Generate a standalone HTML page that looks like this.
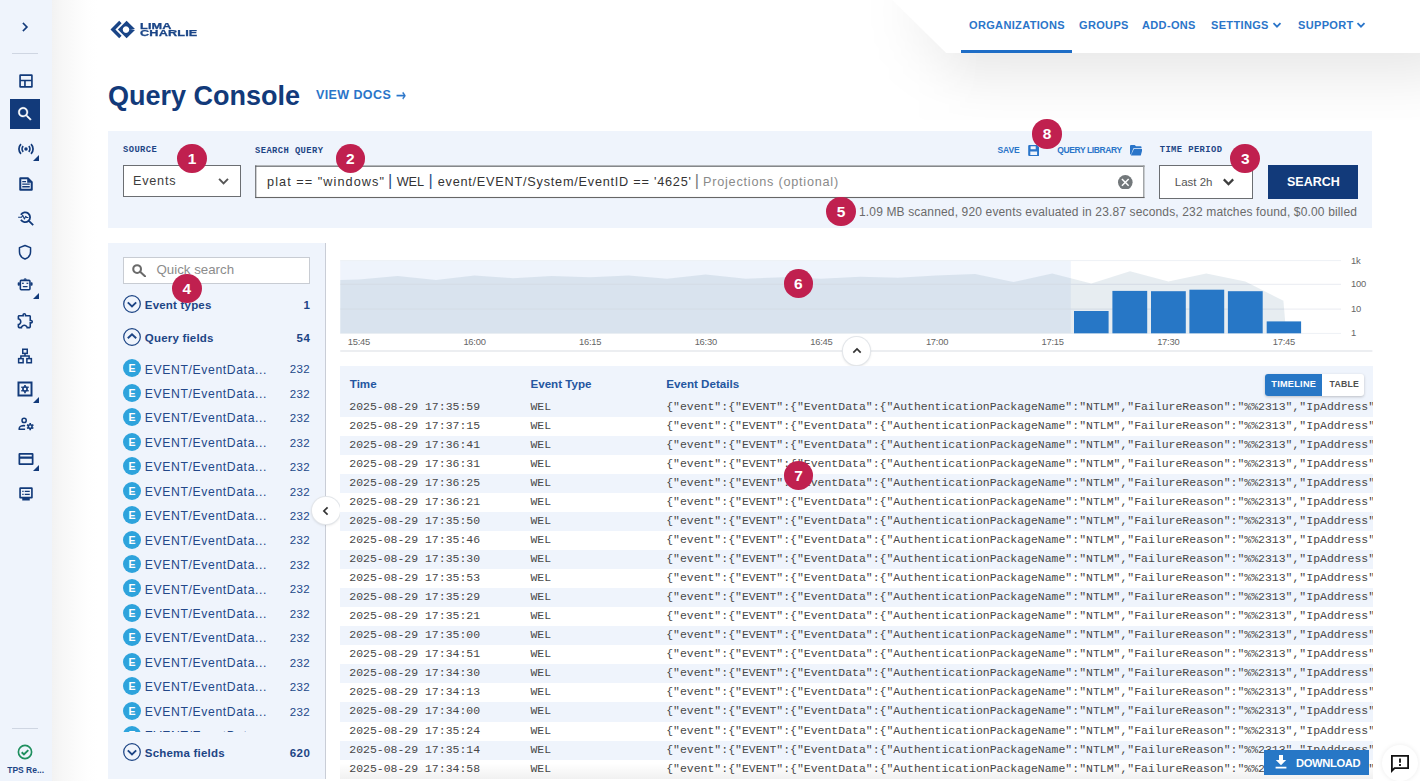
<!DOCTYPE html>
<html lang="en">
<head>
<meta charset="utf-8">
<title>Query Console</title>
<style>
*{box-sizing:border-box;margin:0;padding:0}
html,body{width:1420px;height:781px;overflow:hidden;background:#fff}
body{position:relative;font-family:"Liberation Sans",Arial,sans-serif;color:#123a7a}
.abs{position:absolute}
.t{position:absolute;white-space:nowrap;line-height:1}
#side{left:0;top:0;width:51.7px;height:781px;background:#eff4fc}
#sideshadow{left:51px;top:0;width:46px;height:781px;background:linear-gradient(90deg,#f2f2f2 0%,#f7f7f7 25%,#fbfbfb 55%,#fefefe 80%,#fff 100%)}
.tri{position:absolute;width:0;height:0;margin-top:-.6px;border-left:6.2px solid transparent;border-bottom:6.2px solid #123a7a}
.badge{position:absolute;width:29.6px;height:29.2px;border-radius:50%;background:#c0204f;color:#fff;font-family:"Liberation Sans",Arial,sans-serif;font-weight:bold;font-size:15.5px;line-height:29.6px;text-align:center}
.nav{position:absolute;top:18.7px;font-size:11px;font-weight:bold;color:#2a75c9;letter-spacing:.35px;line-height:12px;white-space:nowrap}
#spanel{left:108px;top:131px;width:1264.3px;height:96.7px;background:#eff4fc}
.lbl{position:absolute;font-family:"Liberation Mono","DejaVu Sans Mono",monospace;font-weight:bold;font-size:8.8px;letter-spacing:.42px;line-height:9px;color:#1d4585;white-space:nowrap}
.box{position:absolute;background:#fff;border:1px solid #6b6e72}
.pipe{display:inline-block;width:1.2px;height:15.5px;vertical-align:-3px;margin:0 2.4px 0 2.6px}
.row{position:absolute;left:0;width:1034px;height:19.1px;font-family:"Liberation Mono","DejaVu Sans Mono",monospace;font-size:11.475px;color:#484848;line-height:17.2px;white-space:nowrap}
.row span{position:absolute;top:0}
</style>
</head>
<body>
<div id="sideshadow" class="abs"></div>
<div id="side" class="abs"></div>
<div class="abs" style="left:12px;top:53px;width:26px;height:1px;background:#cfd6e2"></div>
<svg class="abs" style="left:16px;top:18.2px" width="18" height="18" viewBox="0 0 24 24"><path fill="#123a7a" d="M10 6L8.59 7.41 13.17 12l-4.58 4.59L10 18l6-6z" stroke="#123a7a" stroke-width=".3"/></svg>
<!-- dashboard -->
<svg class="abs" style="left:17.25px;top:71.5px" width="18" height="18" viewBox="0 0 24 24"><path fill="#123a7a" fill-rule="evenodd" d="M4.5 3h15A1.5 1.5 0 0 1 21 4.500v15a1.500 1.500 0 0 1-1.500 1.500h-15A1.500 1.500 0 0 1 3 19.500v-15A1.500 1.500 0 0 1 4.500 3zM5.200 5.400v4.800h13.600V5.400zM5.200 12.400v6.400h4.300v-6.400zM11.700 12.400v6.400h7.100v-6.400z"/></svg>
<!-- active search -->
<div class="abs" style="left:9.9px;top:98.900px;width:30.400px;height:30.200px;background:#123a7a"></div>
<svg class="abs" style="left:16.45px;top:105.25px" width="18" height="18" viewBox="0 0 24 24"><path fill="#fff" d="M15.5 14h-.79l-.28-.27C15.410 12.590 16 11.110 16 9.500 16 5.910 13.090 3 9.500 3S3 5.910 3 9.500 5.910 16 9.500 16c1.610 0 3.090-.590 4.230-1.570l.27.280v.790l5 4.990L20.490 19l-4.990-5zm-6 0C7.010 14 5 11.990 5 9.500S7.010 5 9.500 5 14 7.010 14 9.500 11.990 14 9.500 14z" stroke="#fff" stroke-width=".5"/></svg>
<!-- sensors -->
<svg class="abs" style="left:17.2px;top:140.2px" width="18" height="18" viewBox="0 0 24 24" fill="none" stroke="#123a7a" stroke-width="2.300" stroke-linecap="butt"><circle cx="12" cy="12" r="2.300" fill="#123a7a" stroke="none"/><path d="M8.300 8.300a5.300 5.300 0 0 0 0 7.400M15.700 8.300a5.300 5.300 0 0 1 0 7.400M5.300 5.400a9.400 9.400 0 0 0 0 13.200M18.700 5.400a9.400 9.400 0 0 1 0 13.200"/></svg>
<div class="tri" style="left:33.4px;top:156px"></div>
<!-- doc -->
<svg class="abs" style="left:17.25px;top:175px" width="18" height="18" viewBox="0 0 24 24"><path fill="#123a7a" fill-rule="evenodd" d="M4.500 3H15l6 6v10.500a1.500 1.500 0 0 1-1.500 1.500h-15A1.500 1.500 0 0 1 3 19.500v-15A1.500 1.500 0 0 1 4.500 3zM5.700 5.700v12.600h12.600V10.400H13.600V5.700zM7 8h5v1.800H7zM7 11.300h10v1.800H7zM7 14.700h10v1.800H7z"/></svg>
<!-- troubleshoot -->
<svg class="abs" style="left:16.65px;top:208.5px" width="18" height="18" viewBox="0 0 24 24" fill="none" stroke="#123a7a"><path stroke-width="2.400" d="M5.200 7.600A6.600 6.600 0 1 1 5.200 14.400M15.800 15.800L21.600 21.600"/><path stroke-width="1.400" stroke-linejoin="round" d="M1.500 11h4.600l1.500-2.600 2.300 5 1.800-3.600 1 1.400h2.500"/></svg>
<!-- shield -->
<svg class="abs" style="left:16.25px;top:243px" width="18" height="18" viewBox="0 0 24 24" fill="none" stroke="#123a7a" stroke-width="2" stroke-linejoin="round"><path d="M12 3.300L4.600 6.200v5.300c0 4.700 3.100 8.300 7.400 9.800 4.300-1.500 7.400-5.100 7.400-9.800V6.200z"/></svg>
<!-- robot -->
<svg class="abs" style="left:16px;top:275px" width="18" height="18" viewBox="16 275 18 18"><g fill="#123a7a"><rect x="20.35" y="280.35" width="9.6" height="9.4" rx=".9" fill="none" stroke="#123a7a" stroke-width="1.55"/><path d="M23.5 279.800a1.650 1.650 0 0 1 3.300 0z"/><rect x="17.700" y="282.200" width="2.200" height="3.500" rx=".9"/><rect x="30.400" y="282.200" width="2.200" height="3.500" rx=".9"/><rect x="22" y="282.700" width="1.800" height="1.200"/><rect x="26.500" y="282.700" width="1.800" height="1.200"/><rect x="22.700" y="285.900" width="5" height="1.300" rx=".6"/></g></svg>
<div class="tri" style="left:33.4px;top:294px"></div>
<!-- puzzle -->
<svg class="abs" style="left:15.6px;top:311.2px" width="19" height="19" viewBox="0 0 24 24"><path fill="#123a7a" d="M10.5 4.500c.280 0 .5.220.5.500v2h6v6h2c.280 0 .5.220.5.500s-.220.500-.500.500h-2v6h-2.120c-.680-1.750-2.390-3-4.380-3s-3.700 1.250-4.380 3H4v-2.120c1.750-.680 3-2.390 3-4.380 0-1.990-1.240-3.700-2.990-4.380L4 7h6V5c0-.280.220-.500.500-.500m0-2C9.120 2.500 8 3.620 8 5H4c-1.100 0-1.990.900-1.990 2v3.800h.290c1.490 0 2.700 1.210 2.700 2.700s-1.210 2.700-2.700 2.700H2V20c0 1.100.900 2 2 2h3.800v-.300c0-1.490 1.210-2.700 2.700-2.700s2.700 1.210 2.700 2.700v.300H17c1.100 0 2-.900 2-2v-4c1.380 0 2.500-1.120 2.500-2.500S20.380 11 19 11V7c0-1.100-.900-2-2-2h-4c0-1.380-1.120-2.500-2.500-2.500z"/></svg>
<!-- lan -->
<svg class="abs" style="left:15.650px;top:346.500px" width="18" height="18" viewBox="0 0 24 24" fill="none" stroke="#123a7a" stroke-width="2"><rect x="9" y="3" width="6" height="5.500"/><rect x="3.500" y="15.500" width="6" height="5.500"/><rect x="14.500" y="15.500" width="6" height="5.500"/><path d="M12 8.500v3.600M6.500 15.500v-3.400h11v3.400"/></svg>
<!-- settings app -->
<svg class="abs" style="left:16px;top:380.200px" width="18" height="18" viewBox="0 0 24 24"><path fill="#123a7a" fill-rule="evenodd" d="M2 2h20v20H2zM4.600 4.600v14.800h14.800V4.600z"/><g fill="none" stroke="#123a7a"><circle cx="12" cy="12" r="2.800" stroke-width="2.200"/><path stroke-width="2.200" d="M12 6.500v2M12 15.500v2M7.200 9.200l1.800 1M15 13.800l1.800 1M7.200 14.800l1.800-1M15 10.200l1.800-1"/></g></svg>
<div class="tri" style="left:33.4px;top:397.200px"></div>
<!-- manage accounts -->
<svg class="abs" style="left:16.800px;top:415px" width="18" height="18" viewBox="0 0 24 24" fill="none" stroke="#123a7a"><circle cx="9.500" cy="7.200" r="2.800" stroke-width="2"/><path stroke-width="2.100" d="M10.800 14.300C6.500 13.700 3 15.300 3 17.600v1.300h7.800"/><circle cx="17.6" cy="15.4" r="2.500" stroke-width="2.100"/><path stroke-width="2.200" d="M17.60 18.40L17.60 20.30M15.00 16.90L13.36 17.85M15.00 13.90L13.36 12.95M17.60 12.40L17.60 10.50M20.20 13.90L21.84 12.95M20.20 16.90L21.84 17.85"/></svg>
<!-- card -->
<svg class="abs" style="left:16.850px;top:450.150px" width="18" height="18" viewBox="0 0 24 24"><path fill="#123a7a" fill-rule="evenodd" d="M3.500 4h17A1.500 1.500 0 0 1 22 5.500v13a1.500 1.500 0 0 1-1.500 1.500h-17A1.500 1.500 0 0 1 2 18.500v-13A1.500 1.500 0 0 1 3.500 4zM4.300 6.200v2.300h15.400V6.200zM4.300 11.800v6h15.400v-6z"/></svg>
<div class="tri" style="left:33.4px;top:466px"></div>
<!-- dvr -->
<svg class="abs" style="left:17.250px;top:484.500px" width="18" height="18" viewBox="0 0 24 24"><path fill="#123a7a" fill-rule="evenodd" d="M4.500 3h15A1.500 1.500 0 0 1 21 4.500v12a1.500 1.500 0 0 1-1.500 1.500H17v2.800H7V18H4.500A1.500 1.500 0 0 1 3 16.500v-12A1.500 1.500 0 0 1 4.500 3zM5.200 5.200v10.600h13.600V5.200zM7 7.500h1.800v1.800H7zM10.300 7.500H17v1.800h-6.700zM7 11.500h1.800v1.800H7zM10.300 11.500H17v1.800h-6.700z"/></svg>
<!-- bottom -->
<div class="abs" style="left:12px;top:728px;width:26px;height:1px;background:#cfd6e2"></div>
<svg class="abs" style="left:16.250px;top:743.350px" width="18" height="18" viewBox="0 0 24 24" fill="none" stroke="#1e8f5e"><circle cx="12" cy="12" r="8.800" stroke-width="2.200"/><path stroke-width="2.600" d="M7.600 12.300l3 3 5.800-5.800"/></svg>
<div class="t" style="left:7.200px;top:765.500px;font-size:8.500px;font-weight:bold;color:#1d4585;letter-spacing:0">TPS Re...</div>

<div class="abs" style="left:860px;top:0;width:560px;height:120px;filter:drop-shadow(0 20px 30px rgba(0,0,0,.1));-webkit-mask-image:linear-gradient(90deg,transparent 0,rgba(0,0,0,.35) 40px,#000 120px);mask-image:linear-gradient(90deg,transparent 0,rgba(0,0,0,.35) 40px,#000 120px)"><div class="abs" style="left:0;top:-30px;width:600px;height:83.300px;background:#fff;clip-path:polygon(2px 0,86.500px 83.300px,600px 83.300px,600px 0)"></div></div>
<div class="abs" style="left:961px;top:50px;width:111px;height:3.300px;background:#1e6dc6"></div>
<div class="nav" style="left:969px">ORGANIZATIONS</div>
<div class="nav" style="left:1079px">GROUPS</div>
<div class="nav" style="left:1142px">ADD-ONS</div>
<div class="nav" style="left:1211px">SETTINGS</div>
<div class="nav" style="left:1298px">SUPPORT</div>
<svg class="abs" style="left:1272px;top:19.700px" width="10" height="10" viewBox="0 0 10 10" fill="none" stroke="#2a75c9" stroke-width="1.800"><path d="M1.500 3.200L5 6.700 8.500 3.200"/></svg>
<svg class="abs" style="left:1355.5px;top:19.700px" width="10" height="10" viewBox="0 0 10 10" fill="none" stroke="#2a75c9" stroke-width="1.800"><path d="M1.500 3.200L5 6.700 8.500 3.200"/></svg>
<!-- logo -->
<svg class="abs" style="left:108px;top:17.6px" width="30" height="24" viewBox="0 0 30 24"><g fill="#1a4587"><path d="M11.200 2.800L13.600 5.200 7.400 11.500l6.200 6.300-2.400 2.400L2.500 11.500z"/><path fill-rule="evenodd" d="M18.600 2.800l8.400 8.100-3.300.6h-2.400a3.300 3.300 0 1 0 0 .1l5.700.4-8.400 8.200-8.700-8.700z"/></g></svg>
<div class="t" style="left:140px;top:22.500px;font-size:8.200px;font-weight:bold;color:#1a4587;transform:scaleX(1.550);transform-origin:0 0;letter-spacing:.1px;line-height:7.500px;-webkit-text-stroke:.25px #1a4587">LIMA<br>CHARLIE</div>

<div class="t" style="left:108px;top:83px;font-size:27px;font-weight:bold;color:#123a7a">Query Console</div>
<div class="t" style="left:316px;top:89px;font-size:12.5px;font-weight:bold;color:#2a75c9;letter-spacing:.4px">VIEW DOCS</div>
<div class="t" style="left:396px;top:87.5px;font-family:'DejaVu Sans',sans-serif;font-size:15px;color:#2a75c9;transform:scale(.8,1.15);transform-origin:0 50%;-webkit-text-stroke:.25px #2a75c9">→</div>
<div id="spanel" class="abs"></div>
<div class="lbl" style="left:123px;top:146px">SOURCE</div>
<div class="box" style="left:123px;top:165px;width:118px;height:32px"></div>
<div class="t" style="left:133px;top:175px;font-size:12.700px;color:#3d3d3d;letter-spacing:.74px">Events</div>
<svg class="abs" style="left:217px;top:175px" width="13" height="13" viewBox="217 175 13 13" fill="none" stroke="#555" stroke-width="1.900"><path d="M219.100 178.800L223.550 183.400 228 178.800"/></svg>
<div class="lbl" style="left:255px;top:147px">SEARCH QUERY</div>
<svg class="abs" style="left:250px;top:160px" width="900" height="44" viewBox="250 160 900 44"><rect x="255.2" y="165.4" width="889.3" height="32.65" fill="#fff"/><rect x="255.2" y="165.4" width="889.3" height="1.6" fill="#85888b"/><rect x="1143.1" y="165.4" width="1.4" height="32.65" fill="#9a9da0"/><rect x="255.2" y="196.95" width="889.3" height="1.1" fill="#666"/><rect x="255.2" y="165.4" width="1.1" height="32.65" fill="#5e6266"/></svg>
<div class="t" style="left:267.1px;top:176px;font-size:12.7px;color:#333;letter-spacing:1.05px">plat == "windows"</div>
<div class="t" style="left:387.95px;top:171.5px;font-size:16.3px;color:#2a4f8a">|</div>
<div class="t" style="left:396.7px;top:176px;font-size:12.7px;color:#333;letter-spacing:-.1px">WEL</div>
<div class="t" style="left:428.55px;top:171.5px;font-size:16.3px;color:#2a4f8a">|</div>
<div class="t" style="left:437.7px;top:176px;font-size:12.7px;color:#333;letter-spacing:.77px">event/EVENT/System/EventID == '4625'</div>
<div class="t" style="left:694.85px;top:171.5px;font-size:16.3px;color:#7a7a7a">|</div>
<div class="t" style="left:703px;top:176px;font-size:12.7px;color:#8a8a8a;letter-spacing:.76px">Projections (optional)</div>
<svg class="abs" style="left:1118.200px;top:174.600px" width="14.600" height="14.600" viewBox="0 0 16 16"><circle cx="8" cy="8" r="8" fill="#73787b"/><path d="M4.300 4.300l7.400 7.400M11.700 4.300l-7.400 7.400" stroke="#fff" stroke-width="1.650"/></svg>
<div class="t" style="left:997.500px;top:146.300px;font-size:8.500px;font-weight:bold;color:#2a75c9;letter-spacing:-.100px">SAVE</div>
<svg class="abs" style="left:1028px;top:145px" width="11.400" height="11" viewBox="0 0 12 12"><path fill="#2a75c9" fill-rule="evenodd" d="M1.200 0h8.300L12 2.500v8.300A1.200 1.200 0 0 1 10.800 12H1.200A1.200 1.200 0 0 1 0 10.800V1.200A1.200 1.200 0 0 1 1.200 0zM2.600 1.300v3.200h5.600V1.300zM2.300 7v3.800h7.400V7z"/></svg>
<div class="t" style="left:1057.300px;top:146.300px;font-size:8.500px;font-weight:bold;color:#2a75c9;letter-spacing:-.400px">QUERY LIBRARY</div>
<svg class="abs" style="left:1129.800px;top:145px" width="12.600" height="10.500" viewBox="0 0 24 20"><path fill="#2a75c9" d="M2 0h7l2.500 2.500H20a2 2 0 0 1 2 2V6H6.500L2.200 17.500 0 18V2a2 2 0 0 1 2-2zM7.500 7.500H24l-3.500 12.500H1.500z"/></svg>
<div class="lbl" style="left:1159.700px;top:146px">TIME PERIOD</div>
<div class="box" style="left:1159px;top:165px;width:94px;height:34px"></div>
<div class="t" style="left:1174.800px;top:177px;font-size:11.500px;color:#555">Last 2h</div>
<svg class="abs" style="left:1222px;top:176px" width="13" height="13" viewBox="0 0 13 13" fill="none" stroke="#3d3d3d" stroke-width="2.200"><path d="M1.800 3.400L6.500 8.100 11.200 3.400"/></svg>
<div class="abs" style="left:1267.500px;top:164.600px;width:90.500px;height:34.400px;background:#123a7a"></div>
<div class="t" style="left:1287px;top:175.500px;font-size:12.500px;font-weight:bold;color:#fff">SEARCH</div>
<div class="t" style="left:859px;top:206px;font-size:12px;color:#6a6a6a;letter-spacing:.150px">1.09 MB scanned, 920 events evaluated in 23.87 seconds, 232 matches found, $0.00 billed</div>

<div class="abs" style="left:108px;top:243px;width:218px;height:535.5px;background:#eff4fc;border-right:1px solid #c9cdd6"></div>
<div class="abs" style="left:123px;top:257px;width:186.8px;height:27px;background:#fff;border:1px solid #c8ccd3"></div>
<svg class="abs" style="left:131.700px;top:264.200px" width="14.200" height="13.200" viewBox="0 0 15 14" fill="none" stroke="#6a6a6a" stroke-width="2.2"><circle cx="5.4" cy="5.4" r="4.1"/><path d="M8.6 8.300L14 13.200" stroke-linecap="round"/></svg>
<div class="t" style="left:156.5px;top:263px;font-size:13.3px;color:#8c8c8c">Quick search</div>
<svg class="abs" style="left:123px;top:295px" width="18" height="18" viewBox="0 0 18 18" fill="none" stroke="#1d4585"><circle cx="9" cy="9" r="8.300" stroke-width="1.250"/><path d="M4.8 7.400L9 11.400 13.200 7.400" stroke-width="1.900"/></svg>
<div class="t" style="left:144.8px;top:299.7px;font-size:11.5px;font-weight:bold;color:#1d4585;letter-spacing:.2px">Event types</div>
<div class="t" style="right:1109.8px;top:299.7px;font-size:11.5px;font-weight:bold;color:#1d4585;letter-spacing:.4px">1</div>
<svg class="abs" style="left:123px;top:328.1px" width="18" height="18" viewBox="0 0 18 18" fill="none" stroke="#1d4585"><circle cx="9" cy="9" r="8.300" stroke-width="1.250"/><path d="M4.8 10.200L9 6.200 13.200 10.200" stroke-width="1.900"/></svg>
<div class="t" style="left:144.8px;top:332.8px;font-size:11.5px;font-weight:bold;color:#1d4585;letter-spacing:.2px">Query fields</div>
<div class="t" style="right:1109.8px;top:332.8px;font-size:11.5px;font-weight:bold;color:#1d4585;letter-spacing:.4px">54</div>
<div class="abs" style="left:108px;top:355px;width:217px;height:376.500px;overflow:hidden">
<div class="abs" style="left:15px;top:4.4px;width:18px;height:18px;border-radius:50%;background:#2ea3dc;color:#fff;font-size:10.500px;font-weight:bold;line-height:18px;text-align:center">E</div><div class="t" style="left:36.800px;top:8.5px;font-size:12.200px;color:#234889;letter-spacing:.62px">EVENT/EventData...</div><div class="t" style="right:14.8px;top:9.3px;font-size:11.500px;color:#234889;letter-spacing:.45px">232</div>
<div class="abs" style="left:15px;top:28.85px;width:18px;height:18px;border-radius:50%;background:#2ea3dc;color:#fff;font-size:10.500px;font-weight:bold;line-height:18px;text-align:center">E</div><div class="t" style="left:36.800px;top:32.95px;font-size:12.200px;color:#234889;letter-spacing:.62px">EVENT/EventData...</div><div class="t" style="right:14.8px;top:33.75px;font-size:11.500px;color:#234889;letter-spacing:.45px">232</div>
<div class="abs" style="left:15px;top:53.3px;width:18px;height:18px;border-radius:50%;background:#2ea3dc;color:#fff;font-size:10.500px;font-weight:bold;line-height:18px;text-align:center">E</div><div class="t" style="left:36.800px;top:57.4px;font-size:12.200px;color:#234889;letter-spacing:.62px">EVENT/EventData...</div><div class="t" style="right:14.8px;top:58.2px;font-size:11.500px;color:#234889;letter-spacing:.45px">232</div>
<div class="abs" style="left:15px;top:77.75px;width:18px;height:18px;border-radius:50%;background:#2ea3dc;color:#fff;font-size:10.500px;font-weight:bold;line-height:18px;text-align:center">E</div><div class="t" style="left:36.800px;top:81.85px;font-size:12.200px;color:#234889;letter-spacing:.62px">EVENT/EventData...</div><div class="t" style="right:14.8px;top:82.65px;font-size:11.500px;color:#234889;letter-spacing:.45px">232</div>
<div class="abs" style="left:15px;top:102.2px;width:18px;height:18px;border-radius:50%;background:#2ea3dc;color:#fff;font-size:10.500px;font-weight:bold;line-height:18px;text-align:center">E</div><div class="t" style="left:36.800px;top:106.3px;font-size:12.200px;color:#234889;letter-spacing:.62px">EVENT/EventData...</div><div class="t" style="right:14.8px;top:107.1px;font-size:11.500px;color:#234889;letter-spacing:.45px">232</div>
<div class="abs" style="left:15px;top:126.65px;width:18px;height:18px;border-radius:50%;background:#2ea3dc;color:#fff;font-size:10.500px;font-weight:bold;line-height:18px;text-align:center">E</div><div class="t" style="left:36.800px;top:130.75px;font-size:12.200px;color:#234889;letter-spacing:.62px">EVENT/EventData...</div><div class="t" style="right:14.8px;top:131.55px;font-size:11.500px;color:#234889;letter-spacing:.45px">232</div>
<div class="abs" style="left:15px;top:151.1px;width:18px;height:18px;border-radius:50%;background:#2ea3dc;color:#fff;font-size:10.500px;font-weight:bold;line-height:18px;text-align:center">E</div><div class="t" style="left:36.800px;top:155.2px;font-size:12.200px;color:#234889;letter-spacing:.62px">EVENT/EventData...</div><div class="t" style="right:14.8px;top:156px;font-size:11.500px;color:#234889;letter-spacing:.45px">232</div>
<div class="abs" style="left:15px;top:175.55px;width:18px;height:18px;border-radius:50%;background:#2ea3dc;color:#fff;font-size:10.500px;font-weight:bold;line-height:18px;text-align:center">E</div><div class="t" style="left:36.800px;top:179.65px;font-size:12.200px;color:#234889;letter-spacing:.62px">EVENT/EventData...</div><div class="t" style="right:14.8px;top:180.45px;font-size:11.500px;color:#234889;letter-spacing:.45px">232</div>
<div class="abs" style="left:15px;top:200px;width:18px;height:18px;border-radius:50%;background:#2ea3dc;color:#fff;font-size:10.500px;font-weight:bold;line-height:18px;text-align:center">E</div><div class="t" style="left:36.800px;top:204.1px;font-size:12.200px;color:#234889;letter-spacing:.62px">EVENT/EventData...</div><div class="t" style="right:14.8px;top:204.9px;font-size:11.500px;color:#234889;letter-spacing:.45px">232</div>
<div class="abs" style="left:15px;top:224.45px;width:18px;height:18px;border-radius:50%;background:#2ea3dc;color:#fff;font-size:10.500px;font-weight:bold;line-height:18px;text-align:center">E</div><div class="t" style="left:36.800px;top:228.55px;font-size:12.200px;color:#234889;letter-spacing:.62px">EVENT/EventData...</div><div class="t" style="right:14.8px;top:229.35px;font-size:11.500px;color:#234889;letter-spacing:.45px">232</div>
<div class="abs" style="left:15px;top:248.9px;width:18px;height:18px;border-radius:50%;background:#2ea3dc;color:#fff;font-size:10.500px;font-weight:bold;line-height:18px;text-align:center">E</div><div class="t" style="left:36.800px;top:253px;font-size:12.200px;color:#234889;letter-spacing:.62px">EVENT/EventData...</div><div class="t" style="right:14.8px;top:253.8px;font-size:11.500px;color:#234889;letter-spacing:.45px">232</div>
<div class="abs" style="left:15px;top:273.35px;width:18px;height:18px;border-radius:50%;background:#2ea3dc;color:#fff;font-size:10.500px;font-weight:bold;line-height:18px;text-align:center">E</div><div class="t" style="left:36.800px;top:277.45px;font-size:12.200px;color:#234889;letter-spacing:.62px">EVENT/EventData...</div><div class="t" style="right:14.8px;top:278.25px;font-size:11.500px;color:#234889;letter-spacing:.45px">232</div>
<div class="abs" style="left:15px;top:297.8px;width:18px;height:18px;border-radius:50%;background:#2ea3dc;color:#fff;font-size:10.500px;font-weight:bold;line-height:18px;text-align:center">E</div><div class="t" style="left:36.800px;top:301.9px;font-size:12.200px;color:#234889;letter-spacing:.62px">EVENT/EventData...</div><div class="t" style="right:14.8px;top:302.7px;font-size:11.500px;color:#234889;letter-spacing:.45px">232</div>
<div class="abs" style="left:15px;top:322.25px;width:18px;height:18px;border-radius:50%;background:#2ea3dc;color:#fff;font-size:10.500px;font-weight:bold;line-height:18px;text-align:center">E</div><div class="t" style="left:36.800px;top:326.35px;font-size:12.200px;color:#234889;letter-spacing:.62px">EVENT/EventData...</div><div class="t" style="right:14.8px;top:327.15px;font-size:11.500px;color:#234889;letter-spacing:.45px">232</div>
<div class="abs" style="left:15px;top:346.7px;width:18px;height:18px;border-radius:50%;background:#2ea3dc;color:#fff;font-size:10.500px;font-weight:bold;line-height:18px;text-align:center">E</div><div class="t" style="left:36.800px;top:350.8px;font-size:12.200px;color:#234889;letter-spacing:.62px">EVENT/EventData...</div><div class="t" style="right:14.8px;top:351.6px;font-size:11.500px;color:#234889;letter-spacing:.45px">232</div>
<div class="abs" style="left:15px;top:371.15px;width:18px;height:18px;border-radius:50%;background:#2ea3dc;color:#fff;font-size:10.500px;font-weight:bold;line-height:18px;text-align:center">E</div><div class="t" style="left:36.800px;top:375.25px;font-size:12.200px;color:#234889;letter-spacing:.62px">EVENT/EventData...</div><div class="t" style="right:14.8px;top:376.05px;font-size:11.500px;color:#234889;letter-spacing:.45px">232</div>
</div>
<svg class="abs" style="left:123px;top:742.8px" width="18" height="18" viewBox="0 0 18 18" fill="none" stroke="#1d4585"><circle cx="9" cy="9" r="8.300" stroke-width="1.250"/><path d="M4.8 7.400L9 11.400 13.200 7.400" stroke-width="1.900"/></svg>
<div class="t" style="left:144.8px;top:747.5px;font-size:11.5px;font-weight:bold;color:#1d4585;letter-spacing:.2px">Schema fields</div>
<div class="t" style="right:1109.8px;top:747.5px;font-size:11.5px;font-weight:bold;color:#1d4585;letter-spacing:.4px">620</div>
<div class="abs" style="left:312px;top:496.600px;width:27.600px;height:27.600px;border-radius:50%;background:#fff;box-shadow:0 0 0 1px #e3e6ea,0 1px 3px rgba(0,0,0,.18)"></div>
<svg class="abs" style="left:320.800px;top:506.300px" width="10" height="10" viewBox="0 0 10 10" fill="none" stroke="#333" stroke-width="1.700"><path d="M6.600 1.300L2.900 5 6.600 8.700"/></svg>

<svg class="abs" style="left:0;top:0" width="1420" height="400" viewBox="0 0 1420 400">
<rect x="340.25" y="260.4" width="730.55" height="72.9" fill="#eff4fc"/>
<rect x="340.25" y="260.1" width="1000.75" height="1" fill="#eef1f5"/>
<rect x="340.25" y="283.8" width="1000.75" height="1" fill="#eef1f5"/>
<rect x="340.25" y="308.6" width="1000.75" height="1" fill="#eef1f5"/>
<rect x="340.25" y="332.9" width="1000.75" height="1" fill="#eef1f5"/>
<polygon points="340.25,280 359,279.6 397.5,276 436,280 474.5,275.6 513,278.2 551.5,276 590,277.2 628.5,275.5 667,278.7 705.6,274.4 745.8,278.7 783.8,277.2 821,278.7 860,276.8 898,277.8 936,275.5 975,274 1013.5,282 1052.2,273.6 1091.3,283.5 1130,271.3 1168.4,281.4 1206.3,273.4 1245.3,281.5 1283.4,300.7 1286.2,333.3 340.25,333.3" fill="rgba(92,131,159,.15)"/>
<rect x="340.25" y="283.8" width="1000.75" height="1" fill="rgba(110,130,160,.045)"/>
<rect x="340.25" y="308.6" width="1000.75" height="1" fill="rgba(110,130,160,.045)"/>
<rect x="1074" y="311" width="34.6" height="22.3" fill="#2777c6"/>
<rect x="1112.4" y="290.9" width="34.8" height="42.4" fill="#2777c6"/>
<rect x="1151" y="291.2" width="34.8" height="42.1" fill="#2777c6"/>
<rect x="1189.4" y="289.7" width="34.8" height="43.6" fill="#2777c6"/>
<rect x="1227.9" y="291.2" width="34.8" height="42.1" fill="#2777c6"/>
<rect x="1266.7" y="321.4" width="34.4" height="11.9" fill="#2777c6"/>
<rect x="340.25" y="350.4" width="1032.15" height="1.200" fill="#dfe3e8"/>
<text x="358.9" y="345.300" text-anchor="middle" font-family="Liberation Sans,Arial,sans-serif" font-size="9.400" fill="#666" letter-spacing="-.250">15:45</text>
<text x="474.52" y="345.300" text-anchor="middle" font-family="Liberation Sans,Arial,sans-serif" font-size="9.400" fill="#666" letter-spacing="-.250">16:00</text>
<text x="590.15" y="345.300" text-anchor="middle" font-family="Liberation Sans,Arial,sans-serif" font-size="9.400" fill="#666" letter-spacing="-.250">16:15</text>
<text x="705.77" y="345.300" text-anchor="middle" font-family="Liberation Sans,Arial,sans-serif" font-size="9.400" fill="#666" letter-spacing="-.250">16:30</text>
<text x="821.4" y="345.300" text-anchor="middle" font-family="Liberation Sans,Arial,sans-serif" font-size="9.400" fill="#666" letter-spacing="-.250">16:45</text>
<text x="937.02" y="345.300" text-anchor="middle" font-family="Liberation Sans,Arial,sans-serif" font-size="9.400" fill="#666" letter-spacing="-.250">17:00</text>
<text x="1052.65" y="345.300" text-anchor="middle" font-family="Liberation Sans,Arial,sans-serif" font-size="9.400" fill="#666" letter-spacing="-.250">17:15</text>
<text x="1168.28" y="345.300" text-anchor="middle" font-family="Liberation Sans,Arial,sans-serif" font-size="9.400" fill="#666" letter-spacing="-.250">17:30</text>
<text x="1283.9" y="345.300" text-anchor="middle" font-family="Liberation Sans,Arial,sans-serif" font-size="9.400" fill="#666" letter-spacing="-.250">17:45</text>
<text x="1351" y="264.2" font-family="Liberation Sans,Arial,sans-serif" font-size="9.400" fill="#666" letter-spacing="-.250">1k</text>
<text x="1351" y="287.3" font-family="Liberation Sans,Arial,sans-serif" font-size="9.400" fill="#666" letter-spacing="-.250">100</text>
<text x="1351" y="312" font-family="Liberation Sans,Arial,sans-serif" font-size="9.400" fill="#666" letter-spacing="-.250">10</text>
<text x="1351" y="336.3" font-family="Liberation Sans,Arial,sans-serif" font-size="9.400" fill="#666" letter-spacing="-.250">1</text>
</svg>
<div class="abs" style="left:842.700px;top:337.200px;width:27.600px;height:27.600px;border-radius:50%;background:#fff;box-shadow:0 0 0 1px #e3e6ea,0 1px 3px rgba(0,0,0,.18)"></div>
<svg class="abs" style="left:851.500px;top:346px" width="10" height="10" viewBox="0 0 10 10" fill="none" stroke="#333" stroke-width="1.700"><path d="M1.300 6.600L5 2.900 8.700 6.600"/></svg>

<div class="abs" style="left:340.200px;top:366px;width:1032.500px;height:412.500px;overflow:hidden;background:#fff">
<div class="row" style="top:32px;background:#eff4fc"><span style="left:9.100px">2025-08-29 17:35:59</span><span style="left:190.300px">WEL</span><span style="left:326px">{"event":{"EVENT":{"EventData":{"AuthenticationPackageName":"NTLM","FailureReason":"%%2313","IpAddress"</span></div>
<div class="row" style="top:51.03px;background:#fff"><span style="left:9.100px">2025-08-29 17:37:15</span><span style="left:190.300px">WEL</span><span style="left:326px">{"event":{"EVENT":{"EventData":{"AuthenticationPackageName":"NTLM","FailureReason":"%%2313","IpAddress"</span></div>
<div class="row" style="top:70.06px;background:#eff4fc"><span style="left:9.100px">2025-08-29 17:36:41</span><span style="left:190.300px">WEL</span><span style="left:326px">{"event":{"EVENT":{"EventData":{"AuthenticationPackageName":"NTLM","FailureReason":"%%2313","IpAddress"</span></div>
<div class="row" style="top:89.09px;background:#fff"><span style="left:9.100px">2025-08-29 17:36:31</span><span style="left:190.300px">WEL</span><span style="left:326px">{"event":{"EVENT":{"EventData":{"AuthenticationPackageName":"NTLM","FailureReason":"%%2313","IpAddress"</span></div>
<div class="row" style="top:108.12px;background:#eff4fc"><span style="left:9.100px">2025-08-29 17:36:25</span><span style="left:190.300px">WEL</span><span style="left:326px">{"event":{"EVENT":{"EventData":{"AuthenticationPackageName":"NTLM","FailureReason":"%%2313","IpAddress"</span></div>
<div class="row" style="top:127.15px;background:#fff"><span style="left:9.100px">2025-08-29 17:36:21</span><span style="left:190.300px">WEL</span><span style="left:326px">{"event":{"EVENT":{"EventData":{"AuthenticationPackageName":"NTLM","FailureReason":"%%2313","IpAddress"</span></div>
<div class="row" style="top:146.18px;background:#eff4fc"><span style="left:9.100px">2025-08-29 17:35:50</span><span style="left:190.300px">WEL</span><span style="left:326px">{"event":{"EVENT":{"EventData":{"AuthenticationPackageName":"NTLM","FailureReason":"%%2313","IpAddress"</span></div>
<div class="row" style="top:165.21px;background:#fff"><span style="left:9.100px">2025-08-29 17:35:46</span><span style="left:190.300px">WEL</span><span style="left:326px">{"event":{"EVENT":{"EventData":{"AuthenticationPackageName":"NTLM","FailureReason":"%%2313","IpAddress"</span></div>
<div class="row" style="top:184.24px;background:#eff4fc"><span style="left:9.100px">2025-08-29 17:35:30</span><span style="left:190.300px">WEL</span><span style="left:326px">{"event":{"EVENT":{"EventData":{"AuthenticationPackageName":"NTLM","FailureReason":"%%2313","IpAddress"</span></div>
<div class="row" style="top:203.27px;background:#fff"><span style="left:9.100px">2025-08-29 17:35:53</span><span style="left:190.300px">WEL</span><span style="left:326px">{"event":{"EVENT":{"EventData":{"AuthenticationPackageName":"NTLM","FailureReason":"%%2313","IpAddress"</span></div>
<div class="row" style="top:222.3px;background:#eff4fc"><span style="left:9.100px">2025-08-29 17:35:29</span><span style="left:190.300px">WEL</span><span style="left:326px">{"event":{"EVENT":{"EventData":{"AuthenticationPackageName":"NTLM","FailureReason":"%%2313","IpAddress"</span></div>
<div class="row" style="top:241.33px;background:#fff"><span style="left:9.100px">2025-08-29 17:35:21</span><span style="left:190.300px">WEL</span><span style="left:326px">{"event":{"EVENT":{"EventData":{"AuthenticationPackageName":"NTLM","FailureReason":"%%2313","IpAddress"</span></div>
<div class="row" style="top:260.36px;background:#eff4fc"><span style="left:9.100px">2025-08-29 17:35:00</span><span style="left:190.300px">WEL</span><span style="left:326px">{"event":{"EVENT":{"EventData":{"AuthenticationPackageName":"NTLM","FailureReason":"%%2313","IpAddress"</span></div>
<div class="row" style="top:279.39px;background:#fff"><span style="left:9.100px">2025-08-29 17:34:51</span><span style="left:190.300px">WEL</span><span style="left:326px">{"event":{"EVENT":{"EventData":{"AuthenticationPackageName":"NTLM","FailureReason":"%%2313","IpAddress"</span></div>
<div class="row" style="top:298.42px;background:#eff4fc"><span style="left:9.100px">2025-08-29 17:34:30</span><span style="left:190.300px">WEL</span><span style="left:326px">{"event":{"EVENT":{"EventData":{"AuthenticationPackageName":"NTLM","FailureReason":"%%2313","IpAddress"</span></div>
<div class="row" style="top:317.45px;background:#fff"><span style="left:9.100px">2025-08-29 17:34:13</span><span style="left:190.300px">WEL</span><span style="left:326px">{"event":{"EVENT":{"EventData":{"AuthenticationPackageName":"NTLM","FailureReason":"%%2313","IpAddress"</span></div>
<div class="row" style="top:336.48px;background:#eff4fc"><span style="left:9.100px">2025-08-29 17:34:00</span><span style="left:190.300px">WEL</span><span style="left:326px">{"event":{"EVENT":{"EventData":{"AuthenticationPackageName":"NTLM","FailureReason":"%%2313","IpAddress"</span></div>
<div class="row" style="top:355.51px;background:#fff"><span style="left:9.100px">2025-08-29 17:35:24</span><span style="left:190.300px">WEL</span><span style="left:326px">{"event":{"EVENT":{"EventData":{"AuthenticationPackageName":"NTLM","FailureReason":"%%2313","IpAddress"</span></div>
<div class="row" style="top:374.54px;background:#eff4fc"><span style="left:9.100px">2025-08-29 17:35:14</span><span style="left:190.300px">WEL</span><span style="left:326px">{"event":{"EVENT":{"EventData":{"AuthenticationPackageName":"NTLM","FailureReason":"%%2313","IpAddress"</span></div>
<div class="row" style="top:393.57px;background:#fff"><span style="left:9.100px">2025-08-29 17:34:58</span><span style="left:190.300px">WEL</span><span style="left:326px">{"event":{"EVENT":{"EventData":{"AuthenticationPackageName":"NTLM","FailureReason":"%%2313","IpAddress"</span></div>
<div class="abs" style="left:0;top:0;width:1034px;height:35.400px;background:#eff4fc"></div>
<div class="t" style="left:9.6px;top:12.300px;font-size:11.600px;font-weight:bold;color:#2456a0;letter-spacing:0">Time</div>
<div class="t" style="left:190.3px;top:12.300px;font-size:11.600px;font-weight:bold;color:#2456a0;letter-spacing:0">Event Type</div>
<div class="t" style="left:326.1px;top:12.300px;font-size:11.600px;font-weight:bold;color:#2456a0;letter-spacing:0">Event Details</div>
<div class="abs" style="left:0;top:396.500px;width:1033px;height:16px;background:linear-gradient(180deg,rgba(0,0,0,0),rgba(0,0,0,.055))"></div>
</div>
<div class="abs" style="left:1264.800px;top:373.700px;width:99.700px;height:22.100px;border-radius:3px;background:#fff;box-shadow:0 1px 3px rgba(0,0,0,.22);overflow:hidden"><div class="abs" style="left:0;top:0;width:57.200px;height:23px;background:#2777c6"></div></div>
<div class="t" style="left:1271.300px;top:379.900px;font-size:9.200px;font-weight:bold;color:#fff;letter-spacing:.250px">TIMELINE</div>
<div class="t" style="left:1329.600px;top:379.900px;font-size:8.700px;font-weight:bold;color:#505050;letter-spacing:.250px">TABLE</div>
<div class="abs" style="left:1264px;top:750px;width:105px;height:25px;background:#2777c6"></div>
<svg class="abs" style="left:1274.500px;top:755px" width="12" height="14" viewBox="0 0 12 14" fill="#fff"><path d="M4 0h4v5h3.200L6 10.200.800 5H4zM.600 11.800h10.800v1.700H.600z"/></svg>
<div class="t" style="left:1296px;top:757.700px;font-size:11.200px;font-weight:bold;color:#fff;letter-spacing:-.350px">DOWNLOAD</div>
<div class="abs" style="left:1382px;top:745px;width:36px;height:36px;border-radius:50%;background:#fff;box-shadow:0 0 5px rgba(0,0,0,.08)"></div>
<svg class="abs" style="left:1391px;top:754.500px" width="18" height="18" viewBox="0 0 18 18"><path fill="#111" fill-rule="evenodd" d="M0 0h18v14H4L0 18zM1.800 1.800v11.700l1.400-1.300h13V1.800zM8.100 3.400h1.800v4.400H8.100zM8.100 9.100h1.800v1.800H8.100z"/></svg>

<div class="badge" style="left:177.2px;top:143.6px">1</div>
<div class="badge" style="left:335.5px;top:143.5px">2</div>
<div class="badge" style="left:1032.2px;top:119.4px">8</div>
<div class="badge" style="left:1230.4px;top:143.6px">3</div>
<div class="badge" style="left:826.2px;top:196.7px">5</div>
<div class="badge" style="left:172.0px;top:274.0px">4</div>
<div class="badge" style="left:783.6px;top:268.7px">6</div>
<div class="badge" style="left:783.8px;top:460.8px">7</div>

</body>
</html>
